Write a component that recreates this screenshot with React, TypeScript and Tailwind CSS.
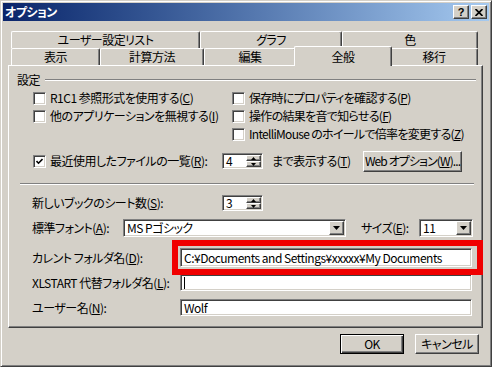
const raised =
    'border border-t-white border-l-white border-r-[#404040] border-b-[#404040] shadow-[inset_-1px_-1px_#808080,inset_1px_1px_#d4d0c8]';
const sunken =
    'border border-t-[#808080] border-l-[#808080] border-r-white border-b-white shadow-[inset_1px_1px_#404040,inset_-1px_-1px_#d4d0c8]';

const Key = ({ c }: { c: string }) => <span className="underline underline-offset-[1px]">{c}</span>;

const Check = ({ checked }: { checked?: boolean }) => (
    <span className={`w-[13px] h-[13px] shrink-0 bg-white flex items-center justify-center ${sunken}`}>
        {checked && (
            <svg width="7" height="7" viewBox="0 0 7 7">
                <path d="M0.5 3 L2.5 5.2 L6.5 1" fill="none" stroke="black" strokeWidth="1.6" />
            </svg>
        )}
    </span>
);

const CheckRow = ({ children, checked }: { children: React.ReactNode; checked?: boolean }) => (
    <div className="h-[18px] flex items-center gap-[4px]">
        <Check checked={checked} />
        <span className="whitespace-nowrap">{children}</span>
    </div>
);

const Arrow = ({ up }: { up?: boolean }) => (
    <svg width="5" height="3" viewBox="0 0 5 3">
        <path d={up ? 'M2.5 0 L5 3 L0 3Z' : 'M0 0 L5 0 L2.5 3Z'} fill="black" />
    </svg>
);

const Spin = ({ value }: { value: string }) => (
    <div className={`w-[41px] h-[16px] bg-white flex p-[1px] ${sunken}`}>
        <span className="flex-1 pl-[2px] leading-[12px]">{value}</span>
        <div className="w-[15px] flex flex-col">
            <div className={`flex-1 bg-[#d4d0c8] flex items-center justify-center ${raised}`}>
                <Arrow up />
            </div>
            <div className={`flex-1 bg-[#d4d0c8] flex items-center justify-center ${raised}`}>
                <Arrow />
            </div>
        </div>
    </div>
);

const Combo = ({ value, width }: { value: string; width: string }) => (
    <div className={`${width} h-[18px] bg-white flex items-center p-[1px] ${sunken}`}>
        <span className="flex-1 pl-[2px] whitespace-nowrap">{value}</span>
        <div className={`w-[15px] h-full bg-[#d4d0c8] flex items-center justify-center ${raised}`}>
            <svg width="7" height="4" viewBox="0 0 7 4">
                <path d="M0 0 L7 0 L3.5 4Z" fill="black" />
            </svg>
        </div>
    </div>
);

const TextBox = ({ value, h, cursor }: { value?: string; h: string; cursor?: boolean }) => (
    <div className={`w-[292px] ${h} bg-white flex items-center pl-[3px] whitespace-nowrap ${sunken}`}>
        {cursor && <span className="w-[1px] h-[12px] bg-black" />}
        {value}
    </div>
);

const BackTab = ({ label, width }: { label: string; width: string }) => (
    <div
        className={`${width} h-[17px] flex items-center justify-center rounded-t-[2px] border-t border-l border-r border-t-white border-l-white border-r-[#404040] shadow-[inset_-1px_0_#808080]`}
    >
        {label}
    </div>
);

export default function App() {
    return (
        <div
            className={`w-[492px] h-[367px] bg-[#d4d0c8] p-[2px] flex flex-col text-[12px] leading-[14px] tracking-[-0.5px] text-black [font-family:'Noto_Sans_CJK_JP','Noto_Sans',sans-serif] [font-feature-settings:'palt'] border border-t-[#d4d0c8] border-l-[#d4d0c8] border-r-[#404040] border-b-[#404040] shadow-[inset_1px_1px_white,inset_-1px_-1px_#808080]`}
        >
            {/* title bar */}
            <div className="h-[18px] bg-linear-to-r from-[#0a246a] to-[#a6caf0] flex items-center pl-[2px] pr-[2px]">
                <span className="text-white font-bold flex-1">オプション</span>
                <div className="flex gap-[2px]">
                    <div className={`w-[16px] h-[14px] bg-[#d4d0c8] flex items-center justify-center ${raised}`}>
                        <span className="text-[11px] leading-[11px] font-bold tracking-normal [font-family:'Liberation_Sans',sans-serif]">?</span>
                    </div>
                    <div className={`w-[16px] h-[14px] bg-[#d4d0c8] flex items-center justify-center ${raised}`}>
                        <svg width="8" height="7" viewBox="0 0 8 7">
                            <path d="M0.5 0 L7.5 7 M7.5 0 L0.5 7" stroke="black" strokeWidth="1.7" />
                        </svg>
                    </div>
                </div>
            </div>

            {/* tabs */}
            <div className="mt-[10px] ml-[8px] flex">
                <BackTab label="ユーザー設定リスト" width="w-[189px]" />
                <BackTab label="グラフ" width="w-[142px]" />
                <BackTab label="色" width="w-[136px]" />
            </div>
            <div className="ml-[8px] flex items-start h-[17px]">
                <BackTab label="表示" width="w-[89px]" />
                <BackTab label="計算方法" width="w-[104px]" />
                <BackTab label="編集" width="w-[92px]" />
                <div className="relative z-10 w-[98px] -mx-[2px] -mt-[2px] h-[20px] bg-[#d4d0c8] flex items-center justify-center rounded-t-[2px] border-t border-l border-r border-t-white border-l-white border-r-[#404040] shadow-[inset_-1px_0_#808080]">
                    全般
                </div>
                <BackTab label="移行" width="w-[88px]" />
            </div>

            {/* panel */}
            <div
                className={`relative ml-[5px] w-[475px] h-[263px] flex flex-col border border-t-white border-l-white border-r-[#404040] border-b-[#404040] shadow-[inset_-1px_-1px_#808080]`}
            >
                <div className="mt-[7px] ml-[8px] mr-[6px] h-[14px] flex items-center">
                    <span>設定</span>
                    <div className="flex-1 ml-[5px] h-0 border-t border-b border-t-[#808080] border-b-white" />
                </div>

                <div className="mt-[2px] ml-[24px] flex">
                    <div className="w-[199px] flex flex-col">
                        <CheckRow>
                            R1C1 参照形式を使用する(<Key c="C" />)
                        </CheckRow>
                        <CheckRow>
                            他のアプリケーションを無視する(<Key c="I" />)
                        </CheckRow>
                    </div>
                    <div className="flex flex-col tracking-[-0.7px]">
                        <CheckRow>
                            保存時にプロパティを確認する(<Key c="P" />)
                        </CheckRow>
                        <CheckRow>
                            操作の結果を音で知らせる(<Key c="F" />)
                        </CheckRow>
                        <CheckRow>
                            IntelliMouse のホイールで倍率を変更する(<Key c="Z" />)
                        </CheckRow>
                    </div>
                </div>

                <div className="mt-[7px] ml-[24px] h-[22px] flex items-center">
                    <div className="w-[189px]">
                        <CheckRow checked>
                            最近使用したファイルの一覧(<Key c="R" />):
                        </CheckRow>
                    </div>
                    <Spin value="4" />
                    <span className="ml-[9px] w-[91px] whitespace-nowrap">
                        まで表示する(<Key c="T" />)
                    </span>
                    <div className={`w-[99px] h-[21px] bg-[#d4d0c8] flex items-center justify-center whitespace-nowrap tracking-[-0.9px] ${raised}`}>
                        Web オプション(<Key c="W" />)...
                    </div>
                </div>

                <div className="mt-[11px] ml-[11px] mr-[8px] h-0 border-t border-b border-t-[#808080] border-b-white" />

                <div className="mt-[10px] ml-[23px] h-[16px] flex items-center">
                    <span className="w-[190px] whitespace-nowrap">
                        新しいブックのシート数(<Key c="S" />):
                    </span>
                    <Spin value="3" />
                </div>

                <div className="mt-[8px] ml-[23px] h-[18px] flex items-center">
                    <span className="w-[91px] whitespace-nowrap">
                        標準フォント(<Key c="A" />):
                    </span>
                    <Combo value="MS Pゴシック" width="w-[223px]" />
                    <span className="ml-[15px] w-[58px] whitespace-nowrap">
                        サイズ(<Key c="E" />):
                    </span>
                    <Combo value="11" width="w-[54px]" />
                </div>

                <div className="mt-[11px] ml-[23px] h-[19px] flex items-center">
                    <span className="w-[148px] whitespace-nowrap">
                        カレント フォルダ名(<Key c="D" />):
                    </span>
                    <TextBox h="h-[19px]" value="C:¥Documents and Settings¥xxxxx¥My Documents" />
                </div>

                <div className="mt-[7px] ml-[23px] h-[17px] flex items-center">
                    <span className="w-[148px] whitespace-nowrap">
                        XLSTART 代替フォルダ名(<Key c="L" />):
                    </span>
                    <TextBox h="h-[17px]" cursor />
                </div>

                <div className="mt-[8px] ml-[23px] h-[17px] flex items-center">
                    <span className="w-[148px] whitespace-nowrap">
                        ユーザー名(<Key c="N" />):
                    </span>
                    <TextBox h="h-[17px]" value="Wolf" />
                </div>

                {/* red highlight */}
                <div className="absolute left-[163px] top-[174px] w-[311px] h-[35px] border-[6px] border-[#f00000]" />
            </div>

            {/* buttons */}
            <div className="mt-[6px] pr-[10px] flex justify-end gap-[11px]">
                <div className="w-[64px] h-[20px] border border-black bg-[#d4d0c8] flex items-center justify-center shadow-[inset_1px_1px_white,inset_-1px_-1px_#404040,inset_-2px_-2px_#808080]">
                    OK
                </div>
                <div className={`w-[64px] h-[20px] bg-[#d4d0c8] flex items-center justify-center ${raised}`}>キャンセル</div>
            </div>
        </div>
    );
}
